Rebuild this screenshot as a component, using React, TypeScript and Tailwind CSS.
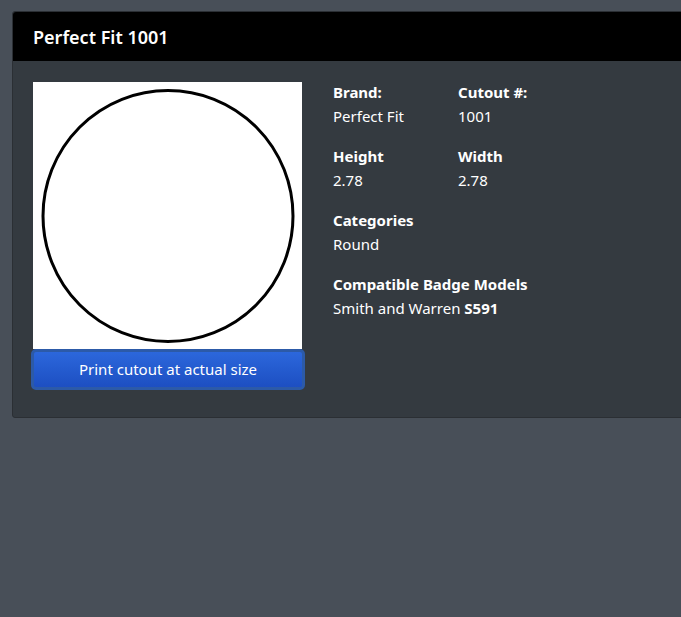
import React from 'react';

const Field = ({ label, value }: { label: string; value: React.ReactNode }) => (
  <div className="w-[125px]">
    <div className="font-bold leading-6">{label}</div>
    <div className="leading-6">{value}</div>
  </div>
);

const App: React.FC = () => {
  return (
    <div className="min-h-[617px] bg-[#484f58] pt-[11px] pl-3 overflow-hidden" style={{ fontFamily: '"Noto Sans", "Open Sans", sans-serif' }}>
      <div className="w-[700px] rounded-[3px] border border-[#2b2f34] bg-[#343a40] text-white text-[15px]">
        <div className="h-[49px] bg-black rounded-t-[3px] flex items-center px-5 pt-[2px]">
          <h1 className="text-[18px] font-semibold">Perfect Fit 1001</h1>
        </div>
        <div className="flex pt-[21px] pb-[27px] pl-[18px]">
          <div className="w-[274px] flex flex-col">
            <div className="ml-[2px] mr-[3px] h-[267px] bg-white flex items-center justify-center">
              <svg width="256" height="256" viewBox="0 0 256 256">
                <ellipse cx="128" cy="128" rx="125" ry="125.5" fill="none" stroke="#000" strokeWidth="3" />
              </svg>
            </div>
            <button className="h-[41px] rounded-[5px] border-[3px] border-[#2c5aa8] bg-gradient-to-b from-[#2c67dc] to-[#1d4fc2] text-white text-[15px]">
              Print cutout at actual size
            </button>
          </div>
          <div className="pl-[28px] mt-[-2px] flex flex-col gap-4">
            <div className="flex">
              <Field label="Brand:" value="Perfect Fit" />
              <Field label="Cutout #:" value="1001" />
            </div>
            <div className="flex">
              <Field label="Height" value="2.78" />
              <Field label="Width" value="2.78" />
            </div>
            <Field label="Categories" value="Round" />
            <div>
              <div className="font-bold leading-6">Compatible Badge Models</div>
              <div className="leading-6">Smith and Warren <span className="font-bold">S591</span></div>
            </div>
          </div>
        </div>
      </div>
    </div>
  );
};

export default App;
